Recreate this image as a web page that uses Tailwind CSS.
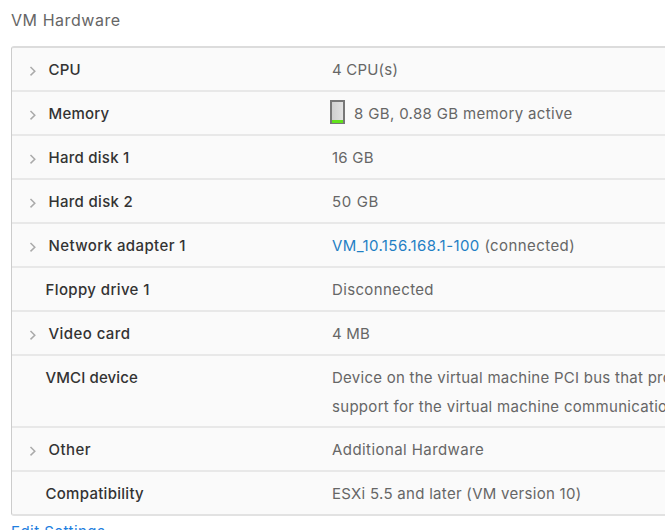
<!DOCTYPE html>
<html lang="en">
<head>
<meta charset="utf-8">
<title>VM Hardware</title>
<script src="https://cdn.jsdelivr.net/npm/@tailwindcss/browser@4"></script>
</head>
<body class="h-[530px] overflow-hidden bg-white font-['Inter',sans-serif] text-[15px] text-[#666]">
<svg class="hidden"><symbol id="chevron" viewBox="0 0 8 12"><path d="M1.5 2 5.8 6.2 1.5 10.4" fill="none" stroke="currentColor" stroke-width="1.5"/></symbol></svg>
<main class="flex h-[530px] w-full flex-col overflow-hidden pl-[11px]">
  <h1 class="h-[46px] shrink-0 pt-[8px] text-[16px] leading-6 tracking-[0.55px] text-[#666]">VM Hardware</h1>
  <dl class="shrink-0 divide-y-2 divide-[#e8e8e8] overflow-hidden rounded-l-[3px] border-t-2 border-b-2 border-l border-t-[#dcdcdc] border-b-[#e2e2e2] border-l-[#ccc] bg-[#fafafa] leading-[28px]">
    <div class="flex h-[44px] pt-[8px]"><dt class="flex w-[320px] shrink-0 pl-[17px] font-medium text-[#333] tracking-[0.19px]"><svg class="mt-[9px] mr-[11.5px] h-3 w-2 text-[#aaa]"><use href="#chevron"/></svg>CPU</dt><dd class="tracking-[0.2px]">4 CPU(s)</dd></div>
    <div class="flex h-[44px] pt-[8px]"><dt class="flex w-[320px] shrink-0 pl-[17px] font-medium text-[#333] tracking-[0.22px]"><svg class="mt-[9px] mr-[11.5px] h-3 w-2 text-[#aaa]"><use href="#chevron"/></svg>Memory</dt><dd class="flex tracking-[0.35px]"><span class="-ml-[2px] mr-[9px] flex h-[24px] w-[15px] items-end border-2 border-[#777] bg-linear-to-r from-[#d0d0d0] to-[#e2e2e2] border-b-[1px]"><span class="h-[3px] w-full bg-[#62e21c]"></span></span>8 GB, 0.88 GB memory active</dd></div>
    <div class="flex h-[44px] pt-[8px]"><dt class="flex w-[320px] shrink-0 pl-[17px] font-medium text-[#333] tracking-[0.26px]"><svg class="mt-[9px] mr-[11.5px] h-3 w-2 text-[#aaa]"><use href="#chevron"/></svg>Hard disk 1</dt><dd class="tracking-[0.25px]">16 GB</dd></div>
    <div class="flex h-[44px] pt-[8px]"><dt class="flex w-[320px] shrink-0 pl-[17px] font-medium text-[#333] tracking-[0.3px]"><svg class="mt-[9px] mr-[11.5px] h-3 w-2 text-[#aaa]"><use href="#chevron"/></svg>Hard disk 2</dt><dd class="tracking-[0.65px]">50 GB</dd></div>
    <div class="flex h-[44px] pt-[8px]"><dt class="flex w-[320px] shrink-0 pl-[17px] font-medium text-[#333] tracking-[0.4px]"><svg class="mt-[9px] mr-[11.5px] h-3 w-2 text-[#aaa]"><use href="#chevron"/></svg>Network adapter 1</dt><dd class="tracking-[0.42px]"><a class="text-[#1f7fc4]">VM_10.156.168.1-100</a> (connected)</dd></div>
    <div class="flex h-[44px] pt-[8px]"><dt class="w-[320px] shrink-0 pl-[33.5px] font-medium text-[#333] tracking-[0.38px]">Floppy drive 1</dt><dd class="tracking-[0.35px]">Disconnected</dd></div>
    <div class="flex h-[44px] pt-[8px]"><dt class="flex w-[320px] shrink-0 pl-[17px] font-medium text-[#333] tracking-[0.43px]"><svg class="mt-[9px] mr-[11.5px] h-3 w-2 text-[#aaa]"><use href="#chevron"/></svg>Video card</dt><dd class="tracking-[0.2px]">4 MB</dd></div>
    <div class="flex h-[72px] pt-[8px]"><dt class="w-[320px] shrink-0 pl-[33.5px] font-medium text-[#333] tracking-[0.12px]">VMCI device</dt><dd class="leading-[28.5px] whitespace-nowrap"><span class="tracking-[0.26px]">Device on the virtual machine PCI bus that provides</span><br><span class="tracking-[0.3px]">support for the virtual machine communication</span></dd></div>
    <div class="flex h-[44px] pt-[8px]"><dt class="flex w-[320px] shrink-0 pl-[17px] font-medium text-[#333] tracking-[0.48px]"><svg class="mt-[9px] mr-[11.5px] h-3 w-2 text-[#aaa]"><use href="#chevron"/></svg>Other</dt><dd class="tracking-[0.43px]">Additional Hardware</dd></div>
    <div class="flex h-[42px] pt-[8px]"><dt class="w-[320px] shrink-0 pl-[33.5px] font-medium text-[#333] tracking-[0.28px]">Compatibility</dt><dd class="tracking-[0.29px]">ESXi 5.5 and later (VM version 10)</dd></div>
  </dl>
  <a class="mt-[4px] leading-6 tracking-[0.46px] text-[#1f7fe0]">Edit Settings</a>
</main>
</body>
</html>
